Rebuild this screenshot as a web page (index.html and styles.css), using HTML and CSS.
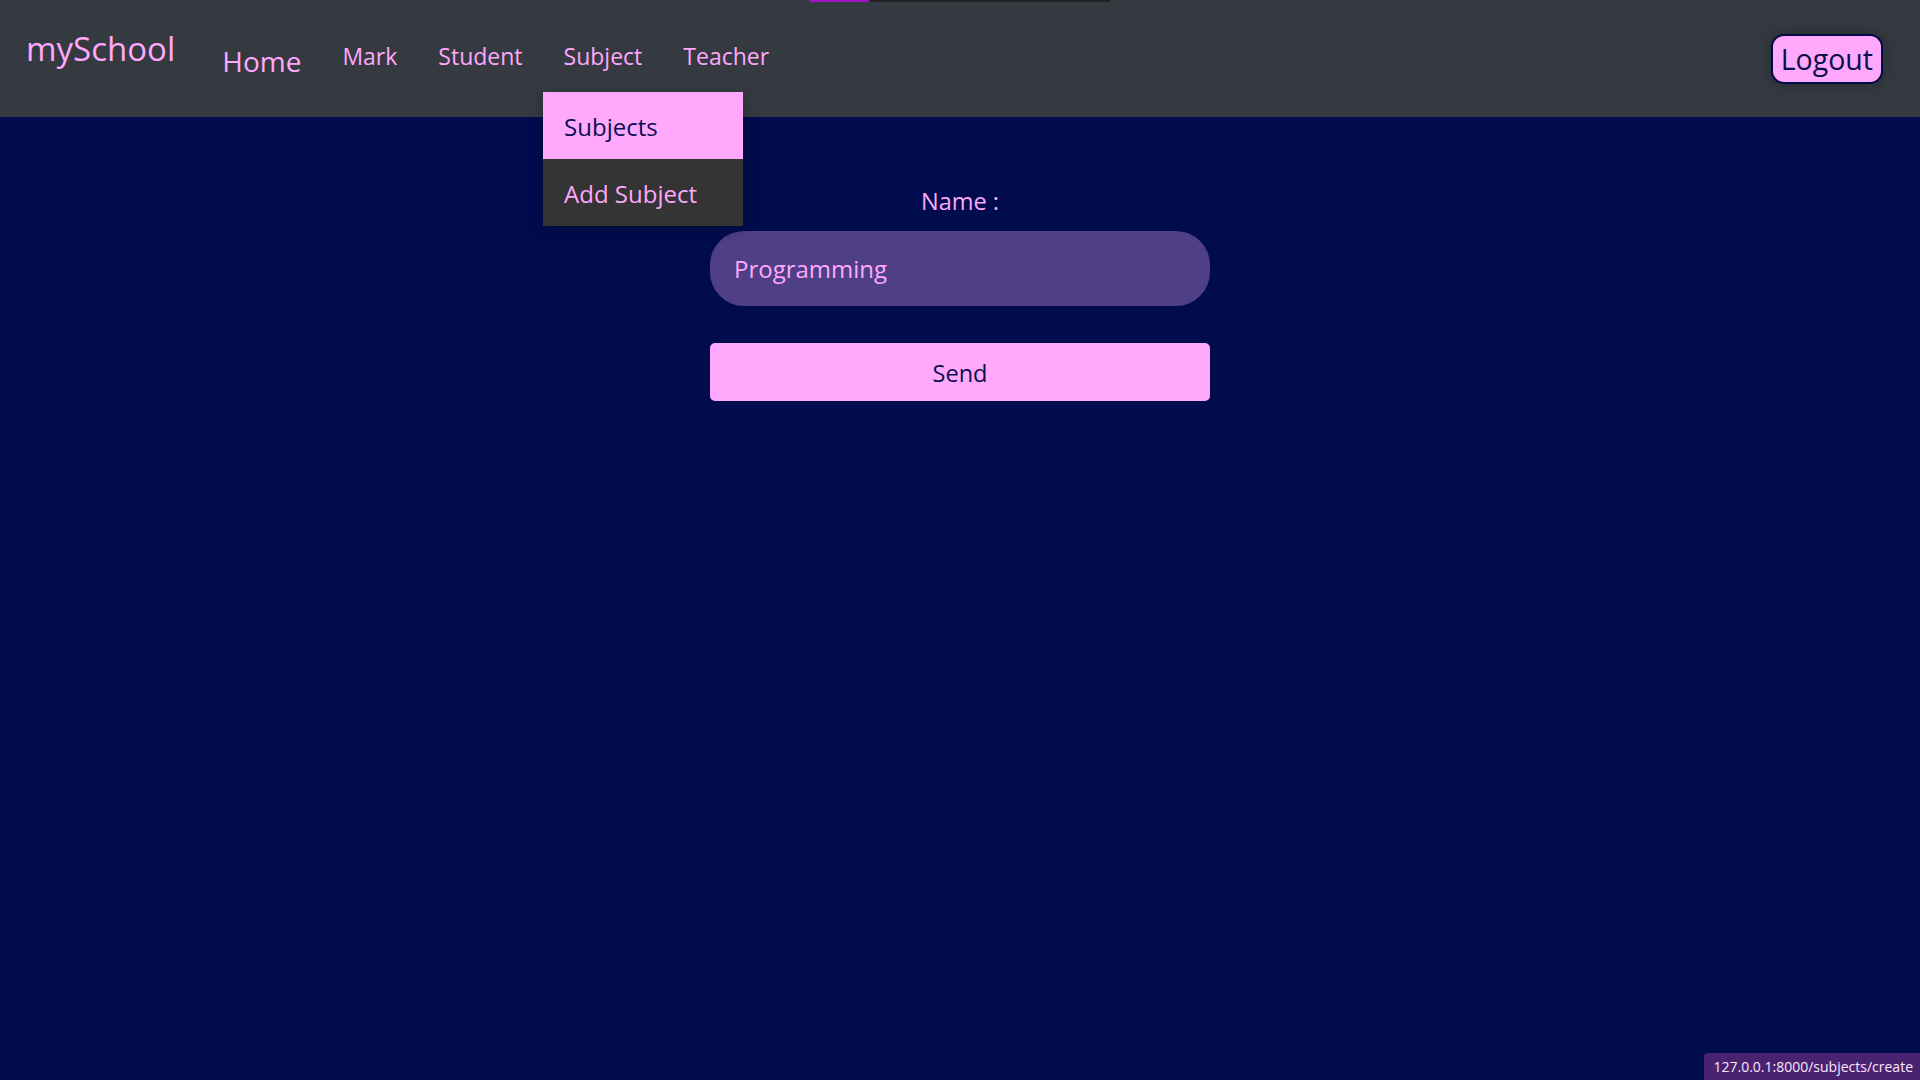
FILE: index.html
```html
<!DOCTYPE html>
<html lang="en">
<head>
<meta charset="utf-8">
<title>mySchool</title>
<link rel="stylesheet" href="styles.css">
</head>
<body>
<div class="loadbar"><span class="loadbar-fill"></span></div>
<header class="navbar">
  <a class="brand" href="#">mySchool</a>
  <ul class="nav">
    <li class="nav-item"><a class="nav-link home" href="#">Home</a></li>
    <li class="nav-item"><a class="nav-link" href="#">Mark</a></li>
    <li class="nav-item"><a class="nav-link" href="#">Student</a></li>
    <li class="nav-item dropdown">
      <a class="nav-link" href="#">Subject</a>
      <div class="dropdown-menu">
        <a class="dropdown-item active" href="#">Subjects</a>
        <a class="dropdown-item" href="#">Add Subject</a>
      </div>
    </li>
    <li class="nav-item"><a class="nav-link" href="#">Teacher</a></li>
  </ul>
  <button class="logout" type="button">Logout</button>
</header>
<main class="main">
  <form class="form">
    <label class="label" for="name">Name :</label>
    <input class="input" id="name" type="text" value="Programming">
    <button class="send" type="button">Send</button>
  </form>
</main>
<div class="status">127.0.0.1:8000/subjects/create</div>
</body>
</html>
```
FILE: styles.css
```css
html, body {
  margin: 0;
  padding: 0;
  height: 100%;
}
body {
  background: #000c4d;
  font-family: "Open Sans", "Noto Sans", sans-serif;
  color: #ffa8fc;
  overflow: hidden;
}
a { text-decoration: none; color: inherit; }

.loadbar {
  position: absolute;
  top: 0;
  left: 809px;
  width: 301px;
  height: 2px;
  background: #222226;
  z-index: 20;
}
.loadbar-fill {
  display: block;
  width: 60px;
  height: 100%;
  background: #a114c4;
}

.navbar {
  position: relative;
  display: flex;
  align-items: flex-start;
  height: 117px;
  background: #343a40;
  padding: 0 37px 0 26px;
  box-sizing: border-box;
}
.brand {
  font-size: 33px;
  line-height: 33px;
  margin-top: 32px;
  margin-right: 27px;
  color: #ffa8fc;
}
.nav {
  list-style: none;
  display: flex;
  align-items: flex-start;
  margin: 0;
  padding: 0;
}
.nav-item {
  position: relative;
}
.nav-link {
  display: block;
  font-size: 23px;
  line-height: 23px;
  margin-top: 45px;
  padding: 0 20.5px;
  color: #ffa8fc;
}
.nav-link.home {
  font-size: 28px;
  line-height: 28px;
  margin-top: 47px;
  padding-left: 20px;
}
.dropdown-menu {
  position: absolute;
  top: calc(100% + 24px);
  left: 0;
  width: 200px;
  z-index: 10;
  box-shadow: 0 4px 12px rgba(0, 0, 0, 0.25);
}
.dropdown-item {
  display: block;
  height: 67px;
  line-height: 69px;
  padding-left: 21px;
  font-size: 24px;
  background: #343434;
  color: #ffa8fc;
}
.dropdown-item.active {
  background: #ffa8fc;
  color: #0a0f50;
}

.logout {
  margin-left: auto;
  align-self: center;
  box-sizing: border-box;
  height: 50px;
  padding: 0 8px;
  border: 2px solid #020a47;
  border-radius: 13px;
  background: #ffa8fc;
  color: #0a0f50;
  font-family: "Open Sans", "Noto Sans", sans-serif;
  font-size: 28.5px;
  line-height: 46px;
  box-shadow: 0 0 14px rgba(0, 0, 0, 0.28);
}

.main {
  display: flex;
  justify-content: center;
}
.form {
  width: 500px;
  display: flex;
  flex-direction: column;
  margin-top: 69px;
}
.label {
  text-align: center;
  font-size: 23.5px;
  line-height: 30px;
  color: #ffa8fc;
}
.input {
  box-sizing: border-box;
  margin-top: 15px;
  height: 75px;
  width: 100%;
  border: none;
  outline: none;
  border-radius: 34px;
  background: #4f3f84;
  color: #ffa8fc;
  padding: 0 24px;
  font-family: "Open Sans", "Noto Sans", sans-serif;
  font-size: 24px;
}
.send {
  box-sizing: border-box;
  margin-top: 37px;
  height: 58px;
  width: 100%;
  border: none;
  border-radius: 5px;
  background: #ffa8fc;
  color: #0a0f50;
  font-family: "Open Sans", "Noto Sans", sans-serif;
  font-size: 23.5px;
  padding-top: 2px;
}

.status {
  position: fixed;
  right: 0;
  bottom: 0;
  height: 27px;
  line-height: 27px;
  padding: 0 7px 0 9px;
  background: #4a2370;
  color: #fbe6ff;
  font-family: "Open Sans", "Noto Sans", sans-serif;
  font-size: 14px;
  border-top-left-radius: 4px;
}
```
